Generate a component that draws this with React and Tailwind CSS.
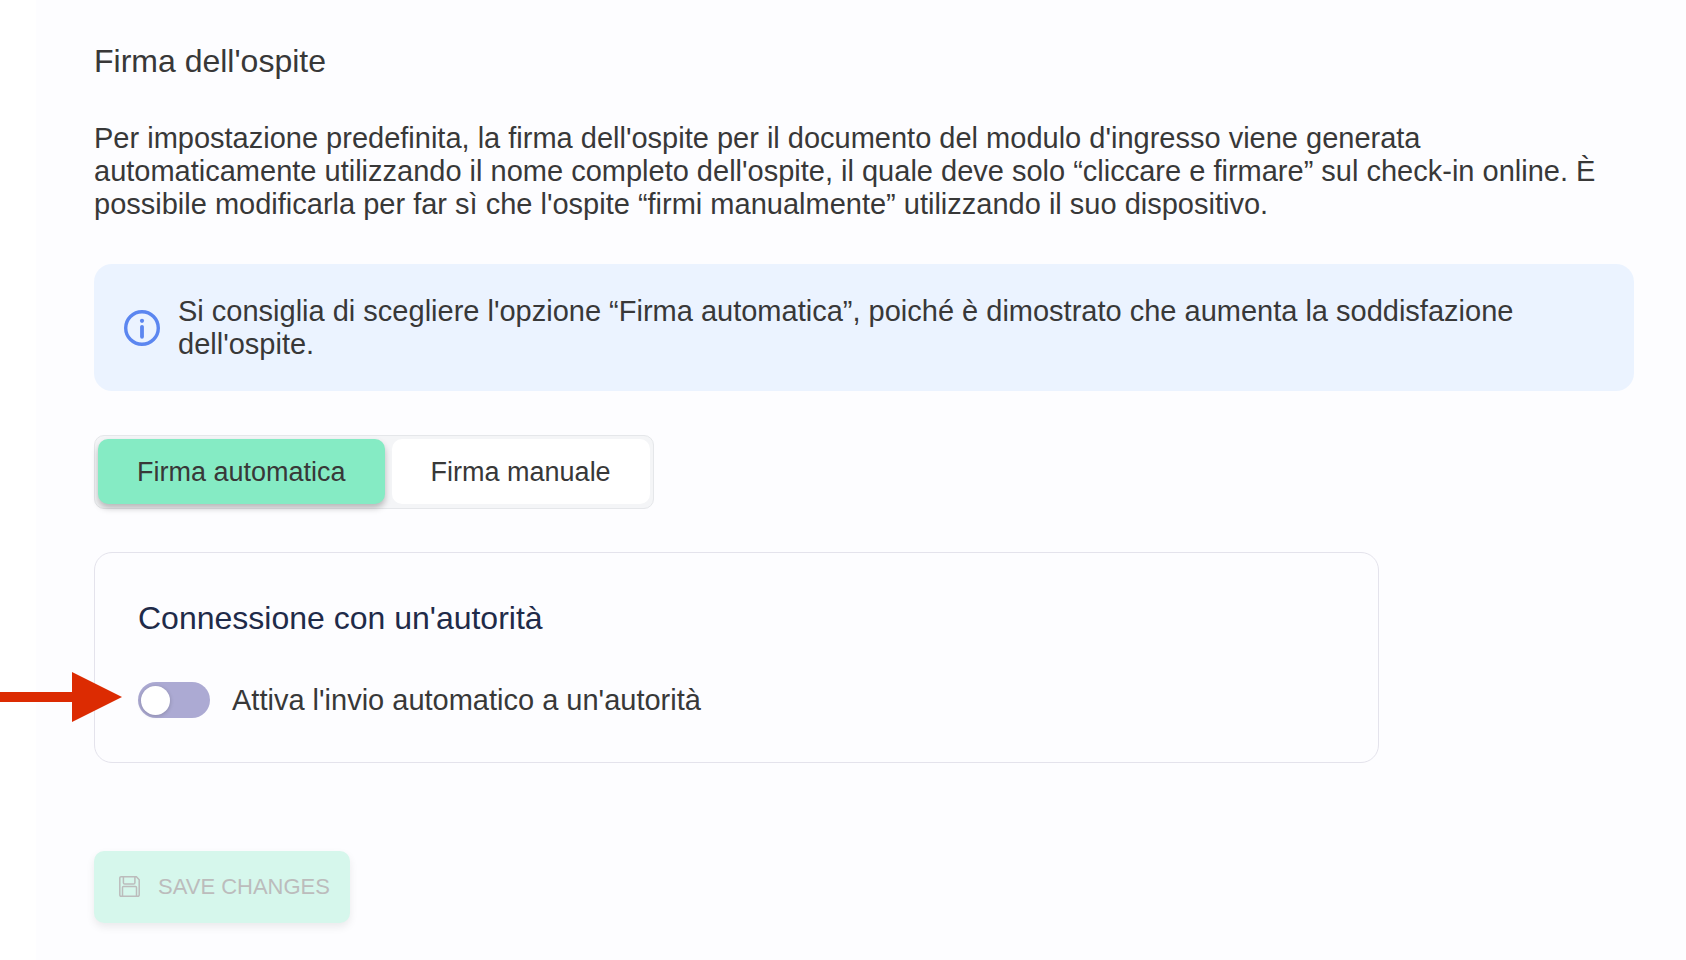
import { useState } from 'react';

const InfoIcon = () => (
  <svg className="w-9 h-9 shrink-0" viewBox="0 0 36 36" fill="none" aria-hidden="true">
    <circle cx="18" cy="18" r="16.3" stroke="#5b86f0" strokeWidth="3.4" />
    <circle cx="18" cy="10.8" r="2.1" fill="#5b86f0" />
    <path d="M18 16.8v10" stroke="#5b86f0" strokeWidth="3.8" strokeLinecap="round" />
  </svg>
);

const SaveIcon = () => (
  <svg className="w-[21px] h-[21px] shrink-0" viewBox="0 0 21 21" fill="none" stroke="currentColor" strokeWidth="1.5" aria-hidden="true">
    <path d="M2 .8h15.4l2.8 3V19a1.2 1.2 0 0 1-1.2 1.2H2A1.2 1.2 0 0 1 .8 19V2A1.2 1.2 0 0 1 2 .8Z" />
    <path d="M4.4.8v6a1.3 1.3 0 0 0 1.3 1.3h8.9a1.3 1.3 0 0 0 1.3-1.3v-6" />
    <path d="M3.5 20.2v-8.7a.9.9 0 0 1 .9-.9h12.2a.9.9 0 0 1 .9.9v8.7" />
  </svg>
);

const signatureOptions = [
  { value: 'auto', label: 'Firma automatica' },
  { value: 'manual', label: 'Firma manuale' },
];

const SignatureSwitch = ({ value, onChange }) => (
  <div className="flex w-fit gap-[7px] rounded-[10px] border border-[#e5e7ea] bg-[#f4f5f7] px-[3px] pt-[3px] pb-1">
    {signatureOptions.map((option) => (
      <button
        key={option.value}
        type="button"
        aria-pressed={value === option.value}
        onClick={() => onChange(option.value)}
        className={
          value === option.value
            ? 'h-[65px] rounded-[10px] bg-[#85ebc4] px-[39px] pt-0.5 text-[27px] shadow-[0_4px_6px_rgba(0,0,0,0.25)]'
            : 'h-[65px] rounded-[10px] bg-white px-[39px] pt-0.5 text-[27px]'
        }
      >
        {option.label}
      </button>
    ))}
  </div>
);

const App = () => {
  const [signature, setSignature] = useState('auto');
  const [autoSend, setAutoSend] = useState(false);

  return (
    <div className="min-h-screen bg-white pl-9 font-['Liberation_Sans',Arial,sans-serif] text-[#383838]">
      <main className="min-h-screen bg-[#fdfdff] pt-[42px] pr-[52px] pb-9 pl-[58px]">
        <h1 className="text-[32px] leading-[38px]">Firma dell'ospite</h1>
        <p className="mt-[42px] text-[29px] leading-[33px]">
          Per impostazione predefinita, la firma dell'ospite per il documento del modulo d'ingresso viene generata
          automaticamente utilizzando il nome completo dell'ospite, il quale deve solo “cliccare e firmare” sul
          check-in online. È possibile modificarla per far sì che l'ospite “firmi manualmente” utilizzando il suo
          dispositivo.
        </p>

        <div className="mt-[43px] flex items-center gap-[18px] rounded-[18px] bg-[#ebf3ff] px-[30px] pt-[31px] pb-[30px]">
          <InfoIcon />
          <p className="text-[29px] leading-[33px]">
            Si consiglia di scegliere l'opzione “Firma automatica”, poiché è dimostrato che aumenta la soddisfazione
            dell'ospite.
          </p>
        </div>

        <div className="mt-11">
          <SignatureSwitch value={signature} onChange={setSignature} />
        </div>

        <section className="mt-[43px] max-w-[1285px] rounded-[18px] border border-[#e4e3ec] px-[43px] pt-[46px] pb-11">
          <h2 className="text-[32px] leading-[38px] text-[#1f2b49]">Connessione con un'autorità</h2>
          <div className="relative mt-[45px] flex w-fit items-center gap-[22px]">
            <input
              id="auto-send"
              type="checkbox"
              role="switch"
              checked={autoSend}
              onChange={(e) => setAutoSend(e.target.checked)}
              className="h-9 w-[72px] shrink-0 cursor-pointer appearance-none rounded-full bg-[#acaad3] px-[3px] py-1 before:block before:size-[29px] before:rounded-full before:bg-white before:shadow-[0_1px_4px_rgba(0,0,0,0.2)] checked:bg-[#6b66c4] checked:before:ml-9"
            />
            <label htmlFor="auto-send" className="cursor-pointer text-[29px] leading-[33px]">
              Attiva l'invio automatico a un'autorità
            </label>
            {/* pointer over the switch */}
            <svg className="pointer-events-none absolute right-full top-1/2 mr-4 h-[50px] w-[122px] -translate-y-7" viewBox="0 0 122 50" aria-hidden="true">
              <path d="M0 20h72V0l50 25-50 25V30H0Z" fill="#dc2b02" />
            </svg>
          </div>
        </section>

        <button
          type="button"
          disabled
          className="mt-[88px] flex h-[72px] items-center gap-[18px] rounded-[10px] bg-[#d6f7ec] pr-5 pb-0.5 pl-[25px] text-[22px] text-[#bcbcbc] shadow-[0_4px_8px_rgba(0,0,0,0.08)]"
        >
          <SaveIcon />
          SAVE CHANGES
        </button>
      </main>
    </div>
  );
};

export default App;
